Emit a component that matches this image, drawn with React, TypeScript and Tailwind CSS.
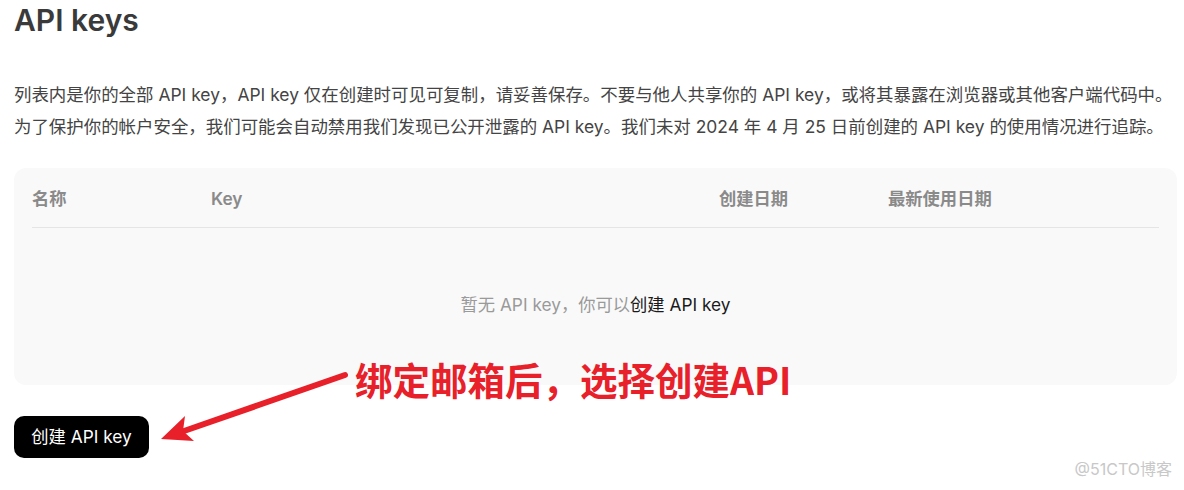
import React from "react";

const font = { fontFamily: "Inter, 'Noto Sans CJK SC', sans-serif" };

const ApiKeysPage: React.FC = () => {
  return (
    <div className="relative h-[490px] w-full overflow-hidden bg-white px-[14px]" style={font}>
      <h1 className="text-[30px] font-semibold leading-[40px] text-[#3a3a3a]">API keys</h1>

      <p className="mt-[39px] whitespace-nowrap text-[17.45px] leading-[32px] text-[#444]">
        列表内是你的全部 API key，API key 仅在创建时可见可复制，请妥善保存。不要与他人共享你的 API key，或将其暴露在浏览器或其他客户端代码中。
        <br />
        为了保护你的帐户安全，我们可能会自动禁用我们发现已公开泄露的 API key。我们未对 2024 年 4 月 25 日前创建的 API key 的使用情况进行追踪。
      </p>

      {/* table */}
      <div className="mt-[25px] w-[1163px] rounded-xl bg-[#f9f9f9] px-[18px]">
        <div className="flex border-b border-[#e5e5e5] pb-[16px] pt-[19px] text-[17.3px] font-semibold leading-[24px] text-[#8a8a8a]">
          <div className="w-[179px]">名称</div>
          <div className="w-[508px]">Key</div>
          <div className="w-[169px]">创建日期</div>
          <div className="flex-1">最新使用日期</div>
        </div>
        <div className="flex h-[157px] items-center justify-center pb-1 text-[17.3px] text-[#9a9a9a]">
          暂无 API key，你可以<span className="text-[#1a1a1a]">创建 API key</span>
        </div>
      </div>

      <button className="mt-[31px] h-[42px] w-[135px] rounded-[10px] bg-black text-[17.3px] text-white">
        创建 API key
      </button>

      {/* annotation */}
      <svg className="pointer-events-none absolute left-0 top-0" width="1184" height="490">
        <line x1="345" y1="375" x2="184" y2="431" stroke="#e8202a" strokeWidth="6" strokeLinecap="round" />
        <polygon points="161,439 185,416 183,431 194,441" fill="#e8202a" />
      </svg>
      <div
        className="absolute left-[355px] top-[360px] text-[37.5px] font-bold leading-[38px] text-[#e8202a]"
        style={{ fontFamily: "'Noto Sans CJK SC', sans-serif" }}
      >
        绑定邮箱后，选择创建API
      </div>

      <div className="absolute bottom-[9px] right-[12px] text-[16px] text-[#c8c8c8]">@51CTO博客</div>
    </div>
  );
};

export default ApiKeysPage;
